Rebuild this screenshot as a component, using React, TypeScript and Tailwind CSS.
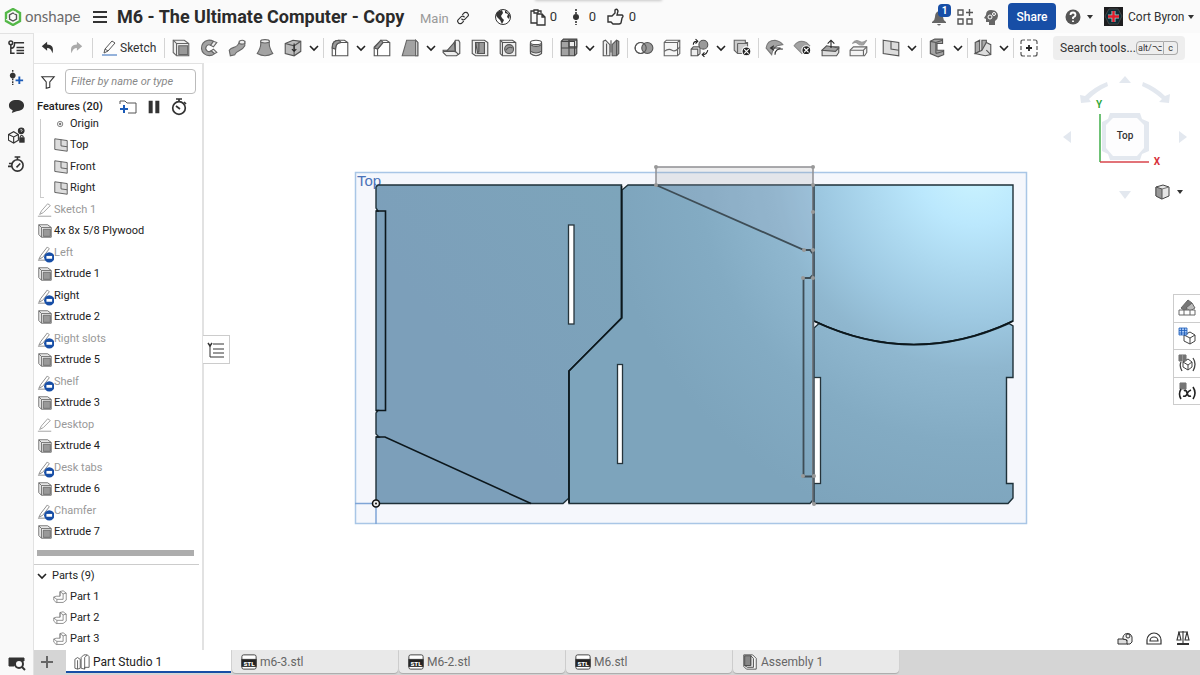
import { ReactNode } from 'react';

const DARK = '#333';
const MID = '#a3a3a3';

const ICONS: Record<string, ReactNode> = {
	undo: <path d="M2 7 L8 2 V5 C13 5 16 8 14 15 C13 11 11 9 8 9 V12 Z" fill={DARK} />,
	redo: <path d="M16 7 L10 2 V5 C5 5 2 8 4 15 C5 11 7 9 10 9 V12 Z" fill="#aaa" />,
	extrude: (
		<g stroke="#666">
			<path d="M2 2 H12 L16 5 V16 H5 L2 13 Z" fill="#eee" />
			<path d="M2 2 L5 5 H16 M5 5 V16" fill="none" />
			<path d="M7 7 H15 V15 H7 Z" fill="#999" />
		</g>
	),
	revolve: (
		<g stroke="#666">
			<path d="M13 3 A7 7 0 1 0 14 14 L11 11.500 A3 3 0 1 1 10.500 6.500 Z" fill={MID} />
			<path d="M10.500 6.500 L13 3 L16 4 L13 8 Z M11 11.500 L13 10 L16 13 L14 14 Z" fill="#eee" />
		</g>
	),
	sweep: (
		<g stroke="#666">
			<path d="M2 11 C5 7 9 10 11 4 L16 3 V7 C13 13 9 10 7 15 L3 16 Z" fill={MID} />
			<path d="M11 3 Q14 1 16 3 V5 Q13 6 11 5 Z" fill="#eee" />
		</g>
	),
	loft: (
		<g stroke="#666">
			<path d="M5 3 C6 8 4 11 2 14 Q9 18 16 14 C14 11 12 8 13 3" fill={MID} />
			<ellipse cx="9" cy="3" rx="4" ry="1.500" fill="#eee" />
		</g>
	),
	thicken: (
		<g stroke="#555">
			<path d="M2 5 L9 2 L16 3 V12 L10 16 L2 14 Z" fill="#bbb" />
			<path d="M2 5 L10 7 L16 3 M10 7 V16" fill="none" />
			<path d="M10 5 V12 M8 10 L10 12 L12 10" fill="none" stroke="#222" />
		</g>
	),
	fillet: (
		<g stroke="#555">
			<path d="M2 16 V8 Q2 2 8 2 H13 L16 4 V16 Z" fill="#fff" />
			<path d="M5 16 V10 Q5 4 10 4 H16" fill="none" />
			<path d="M2 9 Q2 2 8 2 L10 4 Q5 4 5 10 Z" fill="#999" />
		</g>
	),
	chamfer: (
		<g stroke="#555">
			<path d="M2 16 V8 L8 2 H13 L16 4 V16 Z" fill="#fff" />
			<path d="M5 16 V10 L10 4 H16" fill="none" />
			<path d="M2 9 L8 2 L10 4 L5 10 Z" fill="#999" />
		</g>
	),
	draft: (
		<g stroke="#666">
			<path d="M6 2 H14 L16 4 V16 H2 Z" fill={MID} />
			<path d="M14 2 L16 4 V16 H14 Z" fill="#ddd" />
		</g>
	),
	rib: (
		<g stroke="#555">
			<path d="M12 2 H15 L16 4 V14 L13 16 H4 L1 13 V11 H8 Z" fill="#eee" />
			<path d="M11 4 L12 12 H4 Z" fill="#999" />
			<path d="M12 3 V13 M1 12 H12 L15 15" fill="none" />
		</g>
	),
	shell: (
		<g stroke="#555">
			<path d="M2 2 H13 L16 4 V16 H5 L2 14 Z" fill="#eee" />
			<path d="M5 4 H13 V14 H7 Z" fill="#999" />
			<path d="M8 4 V12 L6 14 M5 4 V14" fill="none" />
		</g>
	),
	hole: (
		<g stroke="#555">
			<path d="M2 2 H13 L16 4 V16 H4 L2 14 Z" fill="#eee" />
			<path d="M2 2 L4 4 H16 M4 4 V16" fill="none" />
			<circle cx="10" cy="10" r="4" fill="#999" />
			<path d="M7 11 Q10 7 13 9" fill="none" />
		</g>
	),
	thread: (
		<g stroke="#555">
			<path d="M4 4 V14 Q9 18 14 14 V4" fill="#eee" />
			<path d="M4 6 Q9 9 14 6 V12 Q9 15 4 12 Z" fill="#999" />
			<ellipse cx="9" cy="4" rx="5" ry="2" fill="#fff" />
		</g>
	),
	pattern: (
		<g stroke="#444">
			<path d="M2 3 L4 1 H16 V14 L14 16 H2 Z" fill={MID} />
			<path d="M9 2 H16 V8 H9 Z" fill="#eee" />
			<path d="M2 9 H16 M9 2 V16 M2 3 H14 V16" fill="none" />
		</g>
	),
	mirror: (
		<g stroke="#555">
			<path d="M2 3 L4 2 L8 6 V16 H2 Z" fill="#eee" />
			<path d="M10 6 L14 2 L16 3 V14 L14 16 H10 Z" fill="#999" />
			<path d="M9 2 V13 M5 5 V15 M14 2 V16" fill="none" />
		</g>
	),
	boolean: (
		<g stroke="#555">
			<circle cx="6" cy="9" r="5" fill="#fff" />
			<circle cx="12" cy="9" r="5" fill="#999" />
			<circle cx="6" cy="9" r="5" fill="none" />
		</g>
	),
	split: (
		<g stroke="#666" fill="none">
			<path d="M2 4 L4 2 H16 V14 L14 16 H2 Z M2 4 H14 V16 M14 4 L16 2" fill="#f6f6f6" />
			<path d="M2 12 Q6 9 9 11 T16 8" />
		</g>
	),
	transform: (
		<g stroke="#555">
			<path d="M1 10 L3 8 H9 V14 L7 16 H1 Z M1 10 H7 V16" fill="#eee" />
			<circle cx="12" cy="6" r="4" fill="#999" />
			<path d="M3 6 Q3 3 6 3 M5 1 L7 3 L5 5 M16 11 Q15 15 12 15 M13 13 L11 15 L13 17" fill="none" stroke="#222" />
		</g>
	),
	remove: (
		<g stroke="#666">
			<path d="M2 2 H12 V4 H14 V14 H5 L2 11 Z" fill="#ccc" />
			<path d="M5 5 H14 M5 5 V14" fill="none" />
			<circle cx="13" cy="12" r="4" fill="#222" stroke="#fff" />
			<path d="M11 10 L15 14 M15 10 L11 14" stroke="#fff" />
		</g>
	),
	moveFillet: (
		<g stroke="#777">
			<path d="M1 9 Q2 2 9 2 Q14 3 16 6 L11 7 Q7 9 6 15 Z" fill={MID} />
			<path d="M6 9 L14 9 M8 7 L5 9 L8 11 M9 15 Q9 9 16 10" fill="none" stroke="#333" />
		</g>
	),
	deleteFace: (
		<g stroke="#888">
			<path d="M1 7 Q5 1 12 4 L15 7 L8 14 Z" fill={MID} />
			<circle cx="12" cy="11" r="4" fill="#222" stroke="#fff" />
			<path d="M10 9 L14 13 M14 9 L10 13" stroke="#fff" />
		</g>
	),
	moveFace: (
		<g stroke="#555">
			<path d="M1 11 L5 8 H16 V13 L14 16 H1 Z" fill="#ddd" />
			<path d="M1 11 L5 7 L16 9 L13 12 Z" fill={MID} />
			<path d="M9 9 V2 M6 5 L9 2 L12 5" fill="none" stroke="#222" />
		</g>
	),
	replaceFace: (
		<g stroke="#666">
			<path d="M3 5 Q6 1 9 3 T16 2 L13 6 Q10 7 8 5 T3 5" fill={MID} stroke="#999" />
			<path d="M1 11 L4 8 H16 V13 L14 16 H1 Z" fill="#f4f4f4" />
			<path d="M1 11 H13 V16 M13 11 L16 8" fill="none" />
		</g>
	),
	plane: (
		<g stroke="#555">
			<path d="M2 2 L16 4 V16 L2 14 Z" fill="#ddd" />
			<path d="M9 3 V10 L16 11" fill="none" />
		</g>
	),
	frame: (
		<g stroke="#555">
			<path d="M3 3 L7 1 H14 V5 H9 V11 H15 V15 L10 17 L3 14 Z" fill={MID} />
			<path d="M3 3 L8 4 L14 2 M8 4 V14 M8 14 L15 12" fill="none" />
		</g>
	),
	sheetMetal: (
		<g stroke="#555">
			<path d="M2 4 L6 2 V12 L2 14 Z M8 2 H12 V11 L8 12 Z" fill="#aaa" />
			<path d="M12 4 L16 6 V15 L11 16 L2 14 L8 11 Z" fill="#ddd" />
			<path d="M12 11 L16 15" />
		</g>
	),
	addTool: (
		<g fill="none" stroke="#555">
			<path d="M1 5 V3 Q1 1 3 1 H5 M7 1 H11 M13 1 H15 Q17 1 17 3 V5 M17 7 V11 M17 13 V15 Q17 17 15 17 H13 M11 17 H7 M5 17 H3 Q1 17 1 15 V13 M1 11 V7" strokeWidth="1.200" />
			<path d="M9 6 V12 M6 9 H12" stroke="#222" strokeWidth="1.800" />
		</g>
	),
	pencil: (
		<g fill="none" stroke="#555">
			<path d="M4 14 L5 10 L12 2 L15 4 L8 12 Z M5 10 L8 12" />
			<path d="M2 16 H17" stroke="#2a67b8" />
		</g>
	),
	pencilGray: (
		<g fill="none" stroke="#999">
			<path d="M3 14 L5 10 L12 2 L15 4 L7 12 Z M1 16 H16" />
		</g>
	),
	sketchUsed: (
		<g fill="none" stroke="#888">
			<path d="M2 14 L4 10 L11 1 L13 3 L6 12 Z M1 15 H9" />
			<circle cx="13" cy="12" r="5.500" fill="#174ea6" stroke="none" />
			<rect x="10" y="10.500" width="6" height="3" fill="#fff" stroke="none" />
		</g>
	),
	origin: (
		<g fill="none" stroke="#777">
			<circle cx="8" cy="9" r="3" />
			<circle cx="8" cy="9" r="1" fill="#555" />
		</g>
	),
	part: (
		<g fill="#fff" stroke="#777">
			<path d="M9 2 L13 1 L17 4 V13 L13 16 H4 L1 13 V9 L4 8 H9 Z" />
			<path d="M9 8 V2 L13 5 V12 H5 L1 9 M13 5 L17 4 M5 12 V16" fill="none" />
		</g>
	),
	tree: (
		<g fill="none" stroke={DARK} strokeWidth="1.600">
			<circle cx="3" cy="3" r="2" />
			<path d="M3 5 V14 H7 M3 9 C6 9 7 6 7 3 H17 M9 8 H17 M9 14 H17 M9 11 H17" />
		</g>
	),
	addVersion: (
		<g stroke={DARK} strokeWidth="1.500">
			<path d="M5 1 V17" strokeDasharray="2 1" />
			<circle cx="5" cy="7" r="3" fill={DARK} stroke="none" />
			<path d="M12 8 V16 M8 12 H16" stroke="#1b5bb8" strokeWidth="2" />
		</g>
	),
	comment: <path d="M9 2 C14 2 17 4 17 8 C17 12 13 14 9 14 L4 16 L5 13 C2 12 1 10 1 8 C1 4 4 2 9 2 Z" fill={DARK} />,
	partLock: (
		<g fill="none" stroke={DARK} strokeWidth="1.200">
			<path d="M0.500 8 L6 5 L11 8 V14 L6 17 L0.500 14 Z M0.500 8 L6 10.500 L11 8 M6 10.500 V17" />
			<circle cx="14" cy="4" r="3" fill={DARK} />
			<path d="M13 3 Q15 2 15 4 L14 5" stroke="#fff" strokeWidth="0.800" />
			<path d="M13 11 V10 Q14.500 8 16 10 V11" />
			<rect x="12.500" y="11.500" width="4.500" height="4.500" fill={DARK} />
		</g>
	),
	stopwatch: (
		<g fill="none" stroke={DARK} strokeWidth="1.700">
			<circle cx="10" cy="10" r="6" />
			<path d="M7 1 H13 M10 1 V4 M9 12 L13 8 M1 8 H5 M0 11 H4" />
		</g>
	),
	timer: (
		<g fill="none" stroke={DARK} strokeWidth="1.700">
			<circle cx="9" cy="10" r="6.300" />
			<path d="M6 1 H12 M9 1 V4 M6 8 L10 11 M14 4 L16 6" />
		</g>
	),
	funnel: <path d="M2 3 H16 L11 9 V15 L7 16 V9 Z" fill="none" stroke={DARK} strokeWidth="1.200" />,
	folder: (
		<g fill="none" stroke="#555">
			<path d="M1 6 V3 H6 L8 5 H17 V15 H9" />
			<path d="M5 7 V15 M1 11 H9" stroke="#1b5bb8" strokeWidth="2" />
		</g>
	),
	pause: <path d="M3 2 H7.500 V16 H3 Z M10.500 2 H15 V16 H10.500 Z" fill={DARK} />,
	searchTab: (
		<g fill="none" stroke={DARK}>
			<path d="M1 4 H16 V7 H8 L6 12 H1 Z" fill={DARK} />
			<circle cx="11" cy="10" r="4" fill="#f9f9f9" strokeWidth="2" />
			<path d="M14 13 L17 16" strokeWidth="2" />
		</g>
	),
	studio: (
		<g fill="#fff" stroke="#555">
			<path d="M1 6 L4 4 L7 6 V16 L4 17 L1 16 Z" />
			<path d="M4 7 V17" />
			<path d="M8 4 L11 1 H15 L17 3 V15 H12 V17 L8 16 Z" />
			<path d="M12 4 V17 M12 4 L15 1" fill="none" />
		</g>
	),
	assembly: (
		<g fill="#fff" stroke="#444">
			<path d="M2 1 H12 L16 5 V17 H5 L2 14 Z" />
			<path d="M3 2 H10 V13 H3 Z" fill="#888" />
			<path d="M10 2 L13 5 V15 H6 L3 13 H10 Z" fill="#ddd" />
		</g>
	),
	stl: (
		<g fill="#fff" stroke={DARK}>
			<path d="M3 1 H15 Q17 1 17 3 V15 Q17 17 15 17 H3 Q1 17 1 15 V3 Q1 1 3 1 Z" />
			<rect x="1" y="6" width="16" height="8" fill="#222" />
			<text x="9" y="13" textAnchor="middle" stroke="none" fontSize="7" fontWeight="900">STL</text>
		</g>
	),
	appearance: (
		<g stroke="#666">
			<path d="M3 9 L10 1 L14 4 L7 12 Z" fill="#777" />
			<path d="M8 9 L14 4 L17 9 L12 12 Z" fill="#bbb" />
			<path d="M1 11 H17 V16 H1 Z M6 11 V16 M12 11 V16" fill="#fff" />
		</g>
	),
	tableCube: (
		<g fill="#fff" stroke="#444">
			<path d="M6 8 L12 5 L17 8 V14 L12 17 L6 14 Z M6 8 L12 11 L17 8 M12 11 V17" />
			<path d="M1 1 H9 V8 H1 Z" fill="#a9c8f5" stroke="#1b5bb8" strokeWidth="0.800" />
			<path d="M1 3.500 H9 M1 6 H9 M3.500 1 V8 M6.500 1 V8" stroke="#1b5bb8" strokeWidth="0.800" />
		</g>
	),
	tableParens: (
		<g fill="#fff" stroke="#444">
			<path d="M5 8 L10 5 L14 8 V13 L10 16 L5 13 Z M5 8 L10 11 L14 8 M10 11 V16" />
			<path d="M1 1 H8 V7 H1 Z M1 3 H8 M1 5 H8 M3 1 V7 M6 1 V7" fill="#ccc" strokeWidth="0.800" />
			<path d="M3 8 Q1 12 4 17 M15 4 Q19 10 15 17" fill="none" strokeWidth="1.300" />
		</g>
	),
	tableVariable: (
		<g fill="none" stroke="#222">
			<path d="M2 1 H8 V7 H2 Z M2 3 H8 M2 5 H8 M4 1 V7 M6 1 V7" fill="#ccc" stroke="#444" strokeWidth="0.800" />
			<path d="M3 7 Q0 12 3 17 M15 5 Q19 11 15 17" strokeWidth="1.600" />
			<path d="M6 9 Q8 7 9 11 T13 14 M13 8 Q10 9 9 12 T5 14" strokeWidth="1.600" />
		</g>
	),
	featureTree: (
		<g fill="none" stroke={DARK}>
			<path d="M6 3 H17 M6 8 H17 M6 12 H17 M6 16 H17 M3 5 V16 H6" />
			<path d="M1 2 L3 5 L5 2" strokeWidth="1.500" />
		</g>
	),
	tape: (
		<g fill="#ddd" stroke="#333">
			<path d="M2 10 H9 L12 13 V15 H2 Z" />
			<path d="M7 10 A4.500 4.500 0 1 1 16 8 V13 L14 15 H11 V11 Z" fill="#eee" />
			<circle cx="12" cy="7" r="2" fill="none" />
		</g>
	),
	protractor: (
		<g fill="none" stroke="#333" strokeWidth="1.200">
			<path d="M2 15 V11 A7 7 0 0 1 16 11 V15 Z" />
			<path d="M5 12 A4 4 0 0 1 13 12 Z" />
		</g>
	),
	scales: (
		<g fill="none" stroke="#333" strokeWidth="1.100">
			<path d="M4 3 H14 M9 2 V14 M5 3 L3 11 H7 L5 3 M13 3 L11 11 H15 L13 3" />
			<path d="M3 15 H15" strokeWidth="2" />
		</g>
	),
	link: (
		<g fill="none" stroke={DARK} strokeWidth="1.500">
			<path d="M8 5 L11 2 Q14 1 15 3 Q17 5 15 7 L11 11 Q9 12 7 10" />
			<path d="M10 13 L7 16 Q4 17 3 15 Q1 13 3 11 L7 7 Q9 6 11 8" />
		</g>
	),
	globe: (
		<g fill={DARK} stroke={DARK}>
			<circle cx="9" cy="9" r="7.500" fill="#fff" />
			<path d="M3 4 L8 2 L9 5 L7 8 L8 10 L10 12 L8 16 L6 12 L3 9 L2 7 Z M11 2 L16 7 L15 11 L13 9 L14 6 L11 5 Z" stroke="none" />
		</g>
	),
	clipboard: (
		<g fill="none" stroke={DARK} strokeWidth="1.300">
			<path d="M8 15 H2 V3 H5 M9 3 H12 V5 M5 2 H9 V5 H5 Z" />
			<path d="M8 6 H13 L16 9 V17 H8 Z M13 6 V9 H16" />
		</g>
	),
	versions: (
		<g stroke={DARK}>
			<path d="M9 1 V17" strokeDasharray="2 1" strokeWidth="1.600" />
			<circle cx="9" cy="9" r="3" fill={DARK} stroke="none" />
		</g>
	),
	thumb: <path d="M2 8 H6 L9 5 V2 Q11 0 12 3 L11 7 H16 Q18 8 16 10 L15 15 Q14 16 13 16 H7 L5 14 H2 Z" fill="none" stroke={DARK} strokeWidth="1.400" />,
	bell: (
		<g fill="#666">
			<path d="M9 3 Q13 4 13 9 Q13 12 16 14 V15 H2 V14 Q5 12 5 9 Q5 4 9 3 Z" />
			<path d="M7 16 H11 Q9 19 7 16 Z" />
		</g>
	),
	apps: (
		<g fill="none" stroke="#555" strokeWidth="1.400">
			<path d="M2 2 H7 V7 H2 Z M2 11 H7 V16 H2 Z M11 11 H16 V16 H11 Z M13.500 1 V8 M10 4.500 H17" />
		</g>
	),
	brain: (
		<g>
			<path d="M9 2 C14 2 16 5 16 8 Q16 11 13 13 V17 H7 V14 H4 V11 L2 10 L4 7 Q4 2 9 2 Z" fill="#666" />
			<circle cx="8" cy="9" r="2" fill="none" stroke="#fff" />
			<circle cx="12" cy="6" r="1.500" fill="none" stroke="#fff" />
		</g>
	),
	help: (
		<g>
			<circle cx="9" cy="9" r="7.500" fill="#555" />
			<path d="M6.500 7 Q6.500 4.500 9 4.500 Q11.500 4.500 11.500 7 Q11.500 8.500 9 9.500 V11 M9 12.500 V14" fill="none" stroke="#fff" strokeWidth="1.800" />
		</g>
	),
};

const Icon = ({ name, className = 'size-[18px]' }: { name: string; className?: string }) => (
	<svg viewBox="0 0 18 18" className={`${className} shrink-0`} aria-hidden="true">{ICONS[name]}</svg>
);

const Chevron = () => (
	<svg viewBox="0 0 10 10" className="size-[10px] shrink-0" aria-hidden="true">
		<path d="M1 3 L5 7 L9 3" fill="none" stroke="#222" strokeWidth="1.600" />
	</svg>
);

const Caret = () => (
	<svg viewBox="0 0 6 4" className="h-1 w-1.5 shrink-0" aria-hidden="true">
		<path d="M0 0 H6 L3 4 Z" fill={DARK} />
	</svg>
);

const Separator = ({ tight = false }: { tight?: boolean }) => (
	<span className={`h-5 w-px shrink-0 bg-[#d4d4d4] ml-0.5 ${tight ? 'mr-px' : 'mr-0.5'}`} />
);

// "|" is a separator, "||" a tighter one, "v" a drop-down arrow for the tool before it
const TOOLS = [
	'extrude', 'revolve', 'sweep', 'loft', 'thicken', 'v', '|',
	'fillet', 'v', 'chamfer', 'draft', 'v', 'rib', 'shell', 'hole', 'thread', '|',
	'pattern', 'v', 'mirror', '|',
	'boolean', 'split', 'transform', 'v', 'remove', '|',
	'moveFillet', 'deleteFace', 'moveFace', 'replaceFace', '||',
	'plane', 'v', '||', 'frame', 'v', '||', 'sheetMetal', 'v', '||', 'addTool',
];

const FEATURES = [
	{ label: 'Origin', icon: 'origin', nested: true },
	{ label: 'Top', icon: 'plane', nested: true },
	{ label: 'Front', icon: 'plane', nested: true },
	{ label: 'Right', icon: 'plane', nested: true },
	{ label: 'Sketch 1', icon: 'pencilGray', hidden: true },
	{ label: '4x 8x 5/8 Plywood', icon: 'extrude' },
	{ label: 'Left', icon: 'sketchUsed', hidden: true },
	{ label: 'Extrude 1', icon: 'extrude' },
	{ label: 'Right', icon: 'sketchUsed' },
	{ label: 'Extrude 2', icon: 'extrude' },
	{ label: 'Right slots', icon: 'sketchUsed', hidden: true },
	{ label: 'Extrude 5', icon: 'extrude' },
	{ label: 'Shelf', icon: 'sketchUsed', hidden: true },
	{ label: 'Extrude 3', icon: 'extrude' },
	{ label: 'Desktop', icon: 'pencilGray', hidden: true },
	{ label: 'Extrude 4', icon: 'extrude' },
	{ label: 'Desk tabs', icon: 'sketchUsed', hidden: true },
	{ label: 'Extrude 6', icon: 'extrude' },
	{ label: 'Chamfer', icon: 'sketchUsed', hidden: true },
	{ label: 'Extrude 7', icon: 'extrude' },
];

const PARTS = ['Part 1', 'Part 2', 'Part 3'];

const TABS = [
	{ label: 'm6-3.stl', icon: 'stl' },
	{ label: 'M6-2.stl', icon: 'stl' },
	{ label: 'M6.stl', icon: 'stl' },
	{ label: 'Assembly 1', icon: 'assembly' },
];

const SKETCH_POINTS = [
	[656, 167], [656, 185], [813, 167], [813, 185], [813, 212], [804, 250], [813, 250],
	[803, 278], [813, 278], [803, 476], [814, 476], [814, 504],
];

const Header = () => (
	<header className="relative flex h-[33px] shrink-0 items-center bg-[#fafafa] pl-1 pr-[6px]">
		<div className="absolute left-[535px] -top-1 h-1 w-[127px] shadow-[0_1px_3px_rgba(0,0,0,0.2)]" />
		<svg viewBox="0 0 18 18" className="size-[18px] shrink-0" aria-hidden="true">
			<path d="M9 1 L16 5 V13 L9 17 L2 13 V5 Z" fill="none" stroke="#54b848" strokeWidth="2.400" />
			<path d="M9 5 L12.500 7 V11 L9 13 L5.500 11 V7 Z" fill="none" stroke="#555" strokeWidth="1.400" />
			<path d="M2 12 L5 10 M11 3 V6" stroke="#fafafa" />
		</svg>
		<span className="ml-[3px] w-[68px] shrink-0 pb-0.5 font-[Lato,sans-serif] text-[15px] text-[#6a6a6a]">onshape</span>
		<button aria-label="Menu" className="flex w-[14px] shrink-0 flex-col gap-[3px]">
			<span className="h-[2px] bg-[#333]" />
			<span className="h-[2px] bg-[#333]" />
			<span className="h-[2px] bg-[#333]" />
		</button>
		<h1 className="ml-[10px] w-[303px] shrink-0 text-[18px] font-bold leading-6 whitespace-nowrap text-[#2b2b2b]">M6 - The Ultimate Computer - Copy</h1>
		<span className="w-[36px] shrink-0 pt-1 text-[13px] leading-5 text-[#999]">Main</span>
		<button aria-label="Copy link"><Icon name="link" className="mt-0.5 size-[14px]" /></button>
		<button aria-label="Public document" className="ml-[24px]"><Icon name="globe" /></button>
		<button className="ml-[17px] flex w-7 items-center justify-between text-[13px]"><Icon name="clipboard" />0</button>
		<button className="ml-[10px] flex w-[29px] items-center justify-between text-[13px]"><Icon name="versions" />0</button>
		<button className="ml-[10px] flex w-[30px] items-center justify-between text-[13px]"><Icon name="thumb" />0</button>

		<div className="ml-auto flex items-center">
			<button aria-label="Notifications" className="relative">
				<Icon name="bell" />
				<span className="absolute -top-1 left-2 h-[13px] w-[13px] rounded-sm bg-[#174ea6] text-center text-[10px] font-bold leading-[13px] text-white">1</span>
			</button>
			<button aria-label="Apps" className="ml-2"><Icon name="apps" /></button>
			<button aria-label="Learning" className="ml-2"><Icon name="brain" /></button>
			<button className="ml-2 h-[27px] w-12 rounded-sm bg-[#174ea6] font-medium text-white">Share</button>
			<button aria-label="Help" className="ml-2 flex items-center gap-[5px]"><Icon name="help" /><Caret /></button>
			<button className="ml-[11px] flex items-center gap-[5px]">
				<svg viewBox="0 0 19 19" className="size-[19px]" aria-hidden="true">
					<rect width="19" height="19" fill="#1d1d1f" />
					<path d="M5 2 H14 L18 9 L14 17 H5 L1 9 Z" fill="#0e2c36" stroke="#444" />
					<path d="M9.500 4 V15 M4 9.500 H15" stroke="#9cc" strokeWidth="4" />
					<path d="M9.500 4 V15 M4 9.500 H15" stroke="#e01b2b" strokeWidth="2.400" />
				</svg>
				<span className="w-[55px] whitespace-nowrap">Cort Byron</span>
				<Caret />
			</button>
		</div>
	</header>
);

const Toolbar = () => (
	<div className="flex h-[30px] shrink-0 items-center bg-[#fdfdfd]">
		<button aria-label="Undo" className="flex w-7 shrink-0 justify-center"><Icon name="undo" className="size-4" /></button>
		<button aria-label="Redo" className="flex w-7 shrink-0 justify-center"><Icon name="redo" className="size-4" /></button>
		<Separator />
		<button className="flex w-[67px] shrink-0 items-center gap-0.5 pl-[5px]"><Icon name="pencil" />Sketch</button>
		<Separator />
		{TOOLS.map((tool, index) => {
			if (tool === '|' || tool === '||') return <Separator key={index} tight={tool === '||'} />;
			if (tool === 'v') {
				return <button key={index} aria-label="More tools" className="flex w-[14px] shrink-0 justify-center"><Chevron /></button>;
			}
			return (
				<button key={index} aria-label={tool} className="flex w-7 shrink-0 justify-center">
					<Icon name={tool} className={tool === 'addTool' ? 'size-[18px]' : 'size-5'} />
				</button>
			);
		})}
		<button className="ml-auto mr-[15px] flex h-6 w-[132px] shrink-0 items-center rounded-sm bg-[#eee] pl-[7px]">
			<span className="w-[76px] text-left whitespace-nowrap">Search tools...</span>
			<kbd className="rounded-l-sm border border-[#aaa] px-px font-[Roboto,'DejaVu_Sans',sans-serif] text-[9px] leading-[12px]">alt/⌥</kbd>
			<kbd className="rounded-r-sm border border-l-0 border-[#aaa] px-1 font-[Roboto,sans-serif] text-[9px] leading-[12px]">c</kbd>
		</button>
	</div>
);

const Rail = () => (
	<nav className="flex w-[34px] shrink-0 flex-col items-center border-t border-r border-[#e2e2e2] bg-[#f9f9f9]">
		{['tree', 'addVersion', 'comment', 'partLock', 'stopwatch'].map((name) => (
			<button key={name} aria-label={name} className="flex h-[29px] items-center"><Icon name={name} className="size-[17px]" /></button>
		))}
		<button aria-label="Tab manager" className="mt-auto pb-[3px]"><Icon name="searchTab" /></button>
	</nav>
);

const FeaturePanel = () => (
	<aside className="flex w-[170px] shrink-0 flex-col border-t border-r-2 border-[#e2e2e2] bg-white text-[11px]">
		<div className="flex h-[35px] shrink-0 items-center pl-[6px] pr-[6px]">
			<Icon name="funnel" className="size-4" />
			<input
				aria-label="Filter features"
				placeholder="Filter by name or type"
				className="ml-[9px] h-[25px] min-w-0 flex-1 rounded-sm border border-[#bbb] px-[5px] italic placeholder:text-[#888]"
			/>
		</div>
		<div className="mt-px flex h-[13px] shrink-0 items-center pl-[3px]">
			<h2 className="w-[82px] font-medium text-[#222]">Features (20)</h2>
			<button aria-label="New folder"><Icon name="folder" className="size-[18px]" /></button>
			<button aria-label="Suspend" className="ml-[9px]"><Icon name="pause" className="size-4" /></button>
			<button aria-label="Regeneration times" className="ml-[8px]"><Icon name="timer" className="size-[18px]" /></button>
		</div>
		<ul className="relative grid min-h-0 flex-1 auto-rows-fr pl-[3px]">
			<li aria-hidden="true" className="absolute left-[6px] top-[6px] h-[79px] w-[4px] border-l border-b border-[#ccc]" />
			{FEATURES.map((feature, index) => (
				<li key={index} className={`flex items-center ${feature.nested ? 'pl-4' : ''} ${feature.hidden ? 'text-[#999]' : 'text-[#222]'}`}>
					<Icon name={feature.icon} className={feature.icon === 'sketchUsed' ? 'mt-[3px] size-[17px]' : 'mr-px size-4'} />
					{feature.label}
				</li>
			))}
		</ul>
		<div className="mr-2 ml-[3px] mt-[7px] h-[6px] shrink-0 bg-[#adadad]" />
		<section className="mr-[3px] mt-2 grid h-[86px] shrink-0 grid-rows-4 border-t border-[#ccc] text-[#222]">
			<h3 className="flex items-center gap-[5px] pl-[3px]"><Chevron />Parts (9)</h3>
			{PARTS.map((part) => (
				<div key={part} className="flex items-center gap-[3px] pl-[19px]"><Icon name="part" className="size-[14px]" />{part}</div>
			))}
		</section>
	</aside>
);

const Model = () => (
	<svg viewBox="204 63 996 587" className="absolute inset-0 size-full" role="img" aria-label="Plywood parts, top view">
		<defs>
			<radialGradient id="shade" gradientUnits="userSpaceOnUse" cx="975" cy="165" r="370">
				<stop offset="0" stopColor="#cdf5ff" />
				<stop offset="0.16" stopColor="#bbe8fd" />
				<stop offset="0.42" stopColor="#9dc8e1" />
				<stop offset="0.55" stopColor="#8fb7cf" />
				<stop offset="0.75" stopColor="#83abc3" />
				<stop offset="1" stopColor="#7da4bc" />
			</radialGradient>
			<linearGradient id="left" x1="0" y1="1" x2="1" y2="0">
				<stop offset="0.4" stopColor="#7c9fba" />
				<stop offset="1" stopColor="#7da5bb" />
			</linearGradient>
		</defs>
		<rect x="355.500" y="172.500" width="671" height="351" fill="#f5f7fc" stroke="#a9c6e6" strokeWidth="1.500" />
		<path d="M355 503.500 H376 V524" fill="none" stroke="#7fa5d6" strokeWidth="1.500" />
		<text x="357" y="186" fontSize="15" fill="#4a72b8" className="font-['Liberation_Sans',sans-serif]">Top</text>
		<g stroke="#1e3038" strokeWidth="1.400">
			<path d="M378 185 H621.500 V318 L569 371 V498 L563 503.500 H376 V437 H379 L376 434 V413 L378 410.500 H376 V211 H378 L376 208 V187 Z" fill="url(#left)" />
			<path d="M628 185 H813 V500 L810 503.500 H569 V371 L622 318 V190 Z" fill="url(#shade)" />
			<path d="M814 185 H1013 V321 Q914 368 814 321 Z" fill="url(#shade)" />
			<path d="M819 323.500 Q914 366 1009 323.500 L1013 326 V377.500 H1006.500 V483.500 H1013 V498 L1008 503.500 H814 V328 Z" fill="url(#shade)" />
		</g>
		<g fill="none" stroke="#0c171c" strokeWidth="1.600">
			<path d="M376 211 H385.500 V410.500 H376" />
			<path d="M376 437 H385 L531 503.500" />
			<path d="M621.500 186 V318 L569 371 V503" />
			<path d="M814 321 Q914 368 1013 321" />
		</g>
		<g fill="#fff" stroke="#26343b" strokeWidth="1.300">
			<rect x="568.500" y="225" width="5.500" height="99" />
			<rect x="617.500" y="364.500" width="5" height="99" />
			<rect x="814" y="377.500" width="6.500" height="106" />
		</g>
		<path d="M656 167 H813 V185 H656 Z" fill="#888890" fillOpacity="0.16" />
		<path d="M656 185 H813 V250 H804 Z" fill="#a0b0c8" fillOpacity="0.25" />
		<path d="M656 185 L804 250 H810 L813 254 M813 275 L810 278 H803.500 V476.500 H813" fill="none" stroke="#3e4d56" strokeWidth="1.800" />
		<path d="M656 185 V167 H813 V504" fill="none" stroke="#8f8f93" strokeWidth="1.500" />
		<path d="M813.500 186 V503" stroke="#56626b" strokeWidth="1.500" />
		{SKETCH_POINTS.map(([x, y], index) => (
			<circle key={index} cx={x} cy={y} r="2" fill="#999" />
		))}
		<circle cx="376" cy="503.500" r="3.500" fill="#eee" stroke="#111" strokeWidth="1.600" />
		<circle cx="376" cy="503.500" r="1" fill="#111" />
	</svg>
);

const ViewCube = () => (
	<div className="absolute right-[13px] top-[12px] w-[125px]">
		<svg viewBox="1062 75 125 125" className="w-full" role="img" aria-label="View cube">
			<g fill="#e3e8ef">
				<path d="M1125 76 L1131 83 H1119 Z M1125 199 L1131 191 H1119 Z M1063 137 L1071 131 V143 Z M1187 137 L1179 131 V143 Z" />
				<path d="M1107 82 Q1094 87 1085 96 L1080 95 L1081 103 L1091 102 L1089 99 Q1097 91 1108 86 Z" />
				<path d="M1143 82 Q1156 87 1165 96 L1170 94 L1169 103 L1159 102 L1162 99 Q1153 91 1142 86 Z" />
				<path d="M1110 113 H1140 L1142 119 L1149 122 V151 L1142 154 L1140 160 H1110 L1108 154 L1102 151 V122 L1108 119 Z" />
			</g>
			<path d="M1113 118 H1137 L1144 125 V148 L1137 156 H1113 L1106 148 V125 Z" fill="#fdfdfe" />
			<path d="M1100 114 V162" stroke="#3fae49" strokeWidth="1.500" />
			<path d="M1100 162 H1149" stroke="#d8454b" strokeWidth="1.500" />
			<text x="1125" y="139" textAnchor="middle" fontSize="10" fontWeight="500" fill="#333">Top</text>
			<text x="1099" y="108" textAnchor="middle" fontSize="10" fontWeight="700" fill="#2fa83a">Y</text>
			<text x="1157" y="165" textAnchor="middle" fontSize="10" fontWeight="700" fill="#d8323a">X</text>
		</svg>
	</div>
);

const Viewport = () => (
	<main className="relative min-w-0 flex-1 bg-white">
		<Model />
		<ViewCube />
		<button aria-label="View options" className="absolute right-[17px] top-[121px] flex items-center gap-[7px]">
			<svg viewBox="0 0 15 16" className="h-4 w-[15px]" aria-hidden="true">
				<path d="M1 3 L8 1 L14 3 V12 L7 15 L1 12 Z" fill="#e6e6e6" stroke="#444" />
				<path d="M1 3 L7 5 V15 L1 12 Z" fill="#999" stroke="#555" />
				<path d="M7 5 L14 3" stroke="#777" />
			</svg>
			<Caret />
		</button>
		<button aria-label="Feature list" className="absolute -left-px top-[272px] flex h-[29px] w-[27px] items-center justify-center border border-l-0 border-[#ccc] bg-white">
			<Icon name="featureTree" />
		</button>
		<div className="absolute right-0 top-[231px] flex h-[111px] w-[27px] flex-col divide-y divide-[#ccc] border border-r-0 border-[#ccc] bg-white">
			{['appearance', 'tableCube', 'tableParens', 'tableVariable'].map((name) => (
				<button key={name} aria-label={name} className="flex flex-1 items-center justify-center"><Icon name={name} /></button>
			))}
		</div>
		<div className="absolute bottom-[3px] right-2 flex gap-[11px]">
			<button aria-label="Measure"><Icon name="tape" /></button>
			<button aria-label="Angle"><Icon name="protractor" /></button>
			<button aria-label="Mass properties"><Icon name="scales" /></button>
		</div>
	</main>
);

const TabBar = () => (
	<footer className="flex h-[25px] shrink-0 bg-[#d5d5d5] pb-[2px]">
		<button aria-label="Add tab" className="flex w-8 shrink-0 items-center justify-center pr-[6px]">
			<svg viewBox="0 0 12 12" className="size-3" aria-hidden="true"><path d="M6 0 V12 M0 6 H12" stroke="#666" strokeWidth="2" /></svg>
		</button>
		<button className="flex w-[165px] items-center gap-[3px] border-b-2 border-[#174ea6] bg-white pl-2 pt-0.5 text-[#222]">
			<Icon name="studio" className="size-4" />Part Studio 1
		</button>
		{TABS.map((tab) => (
			<button key={tab.label} className="ml-px flex w-[166px] items-center gap-[3px] rounded-b-sm bg-[#e9e9e9] pl-[9px] text-[#666] shadow-[0_1px_1px_#aaa]">
				<Icon name={tab.icon} className="size-4" />{tab.label}
			</button>
		))}
	</footer>
);

const App = () => (
	<div className="flex h-screen flex-col overflow-hidden bg-white font-[Roboto,sans-serif] text-[12px] leading-4 text-[#333]">
		<Header />
		<div className="flex min-h-0 flex-1">
			<Rail />
			<div className="flex min-w-0 flex-1 flex-col">
				<Toolbar />
				<div className="flex min-h-0 flex-1">
					<FeaturePanel />
					<Viewport />
				</div>
				<TabBar />
			</div>
		</div>
	</div>
);

export default App;
